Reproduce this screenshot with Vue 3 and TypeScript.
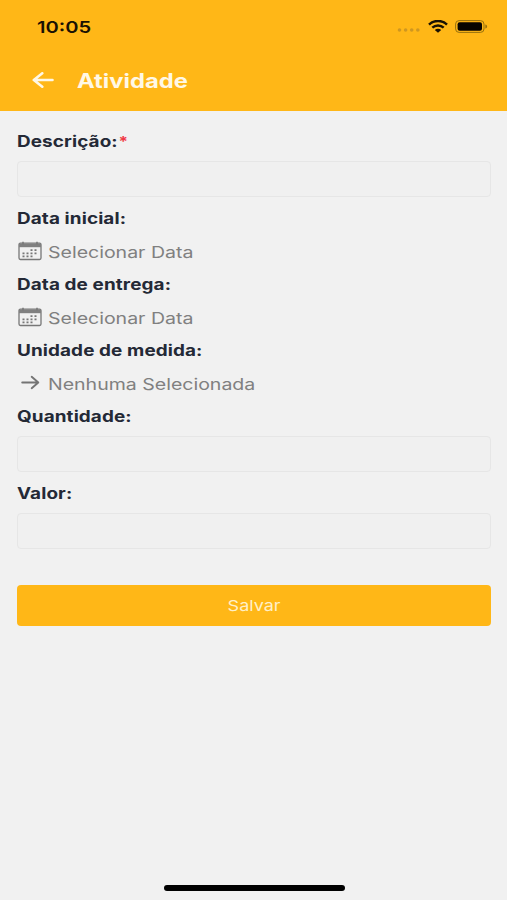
<script setup lang="ts">
import { ref } from 'vue'

type Kind = 'input' | 'date' | 'select'
interface Field {
  id: string
  label: string
  kind: Kind
  placeholder?: string
  required?: boolean
}

const fields: Field[] = [
  { id: 'descricao', label: 'Descrição:', kind: 'input', required: true },
  { id: 'inicial', label: 'Data inicial:', kind: 'date', placeholder: 'Selecionar Data' },
  { id: 'entrega', label: 'Data de entrega:', kind: 'date', placeholder: 'Selecionar Data' },
  { id: 'unidade', label: 'Unidade de medida:', kind: 'select', placeholder: 'Nenhuma Selecionada' },
  { id: 'quantidade', label: 'Quantidade:', kind: 'input' },
  { id: 'valor', label: 'Valor:', kind: 'input' },
]

const values = ref<Record<string, string>>({ descricao: '', quantidade: '', valor: '' })
</script>

<template>
  <div class="screen">
    <header class="header">
      <div class="status">
        <span class="time wide">10:05</span>
        <div class="indicators">
          <svg class="dots" width="24" height="4" viewBox="0 0 24 4">
            <circle v-for="i in 4" :key="i" :cx="i * 6.1 - 3.6" cy="2" r="1.8" />
          </svg>
          <svg class="wifi" width="20" height="13" viewBox="0 0 20 13" fill="none" stroke="#1a1203" stroke-width="2.5">
            <path d="M1 4.6C6-.2 14-.2 19 4.6" />
            <path d="M4.3 7.6C7.5 4.7 12.5 4.7 15.7 7.6" />
            <path d="M6.8 10C8.7 8.2 11.3 8.2 13.2 10L10 12.8Z" fill="#1a1203" stroke="none" />
          </svg>
          <svg class="battery" width="33" height="13" viewBox="0 0 33 13">
            <rect x=".6" y=".6" width="28.4" height="11.8" rx="3.5" fill="none" stroke="#96700f" />
            <rect x="2.6" y="2.3" width="24.4" height="8.4" rx="2" fill="#080500" />
            <path d="M30.3 4.5C32.7 5.1 32.7 7.9 30.3 8.5Z" fill="#96700f" />
          </svg>
        </div>
      </div>
      <div class="nav">
        <svg class="back" width="22" height="16" viewBox="0 0 22 16" fill="none" stroke="#fff8e6" stroke-width="2.6" stroke-linecap="round" stroke-linejoin="round">
          <path d="M20.5 8H1.8M10.3 1.3L1.8 8L10.3 14.7" />
        </svg>
        <h1 class="title"><span class="wide">Atividade</span></h1>
      </div>
    </header>

    <form class="form" @submit.prevent>
      <div v-for="field in fields" :key="field.id" class="field" :class="field.kind">
        <label class="label" :for="field.id">
          <span class="wide">{{ field.label }}<span v-if="field.required" class="star">*</span></span>
        </label>
        <input v-if="field.kind === 'input'" :id="field.id" v-model="values[field.id]" class="box" type="text" />
        <div v-else :id="field.id" class="picker">
          <svg v-if="field.kind === 'date'" class="icon" width="24" height="20" viewBox="0 0 24 20">
            <rect x="1" y="2.2" width="22" height="16.3" rx="1.4" fill="none" stroke="#777" stroke-width="1.3" />
            <path d="M1 2.5H23V6.2H1Z" fill="#808080" />
            <path d="M5 .8V3.5M19 .8V3.5" stroke="#777" stroke-width="1.5" />
            <path d="M12.5 9.2H20.5M4.5 12.3H20.5M4.5 15.4H16.5" fill="none" stroke="#777" stroke-width="1.7" stroke-dasharray="2 2" />
          </svg>
          <svg v-else class="icon" width="24" height="20" viewBox="0 0 24 20" fill="none" stroke="#747474" stroke-width="1.9" stroke-linecap="round" stroke-linejoin="round">
            <path d="M4.2 9.5H20.3M13.7 3.8L20.3 9.5L13.7 15.2" />
          </svg>
          <span class="placeholder wide">{{ field.placeholder }}</span>
        </div>
      </div>
      <button class="save" type="submit"><span class="save-text">Salvar</span></button>
    </form>

    <div class="home"></div>
  </div>
</template>

<style>
body {
  margin: 0;
  background: #f1f1f1;
}
</style>

<style scoped>
.screen {
  box-sizing: border-box;
  height: 900px;
  display: flex;
  flex-direction: column;
  background: #f1f1f1;
  font-family: Inter, "Liberation Sans", sans-serif;
  overflow: hidden;
}
/* Extended letterforms */
.wide {
  display: inline-block;
  white-space: nowrap;
  transform: scaleX(1.22);
  transform-origin: left center;
}
.header {
  flex: none;
  box-sizing: border-box;
  height: 111px;
  background: #ffb717;
}
.status {
  box-sizing: border-box;
  height: 54px;
  padding: 0 19px 0 37px;
  display: flex;
  align-items: center;
  justify-content: space-between;
}
.time {
  font-size: 16.5px;
  font-weight: 600;
  color: #1a1203;
}
.indicators {
  display: flex;
  align-items: center;
  height: 12px;
  margin-bottom: 2px;
}
.dots {
  margin: 8px 7px 0 0;
  fill: #cf9720;
}
.wifi {
  margin-right: 7px;
}
.nav {
  height: 52px;
  padding-left: 32px;
  display: flex;
  align-items: center;
}
.title {
  margin: 2px 0 0 23px;
  font-size: 19.5px;
  line-height: 24px;
  font-weight: 700;
  color: #fff8e6;
}
.form {
  flex: 1;
  padding: 21px 16px 0 17px;
}
.label {
  display: block;
  height: 20px;
  font-size: 15.5px;
  line-height: 20px;
  font-weight: 700;
  letter-spacing: 0.08px;
  color: #242936;
}
.star {
  margin-left: 0.5px;
  font-size: 14px;
  color: #f03a47;
}
.box {
  display: block;
  box-sizing: border-box;
  width: 100%;
  height: 36px;
  margin: 9px 0 12px;
  padding: 0 10px;
  border: 1px solid #e6e6e6;
  border-radius: 4px;
  background: #f0f0f0;
  font: inherit;
  outline: none;
}
.picker {
  height: 24px;
  margin: 11px 0 11px;
  display: flex;
  align-items: center;
}
.icon {
  flex: none;
  margin: -3px 6px 0 1px;
}
.placeholder {
  font-size: 16px;
  line-height: 24px;
  color: #808080;
}
.save {
  display: block;
  width: 100%;
  height: 41px;
  margin: 36px 0 0;
  padding: 0;
  border: 0;
  border-radius: 4px;
  background: #ffb717;
  color: #fff0c8;
  font-family: inherit;
  font-size: 15px;
}
.save-text {
  display: inline-block;
  transform: scaleX(1.2);
}
.home {
  flex: none;
  align-self: center;
  width: 181px;
  height: 6px;
  margin: 0 0 9px 1px;
  border-radius: 3px;
  background: #000;
}
</style>
